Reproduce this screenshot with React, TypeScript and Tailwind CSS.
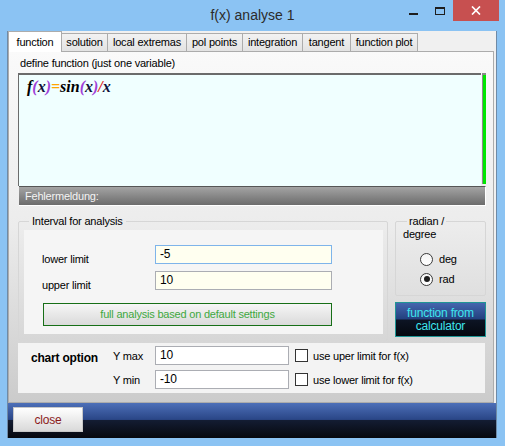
import React from "react";

const tabs = [
  { label: "function", cls: "w-[54px]", active: true },
  { label: "solution", cls: "w-[47px]", active: false },
  { label: "local extremas", cls: "w-[80px]", active: false },
  { label: "pol points", cls: "w-[57px]", active: false },
  { label: "integration", cls: "w-[61px]", active: false },
  { label: "tangent", cls: "w-[49px]", active: false },
  { label: "function plot", cls: "w-[68px]", active: false },
];

function Radio({ checked }: { checked?: boolean }) {
  return (
    <div className="w-[13px] h-[13px] rounded-full border border-[#3a3a3a] bg-linear-to-b from-[#f4f4f4] to-white flex items-center justify-center">
      {checked && <div className="w-[6px] h-[6px] rounded-full bg-[#1c1c1c]" />}
    </div>
  );
}

function Check() {
  return <div className="w-[13px] h-[13px] border border-[#333] bg-white" />;
}

export default function App() {
  return (
    <div className="w-[505px] h-[446px] bg-[#8bc3f3] flex flex-col pb-[8px] font-['Liberation_Sans',Arial,sans-serif] text-[11px] tracking-[-0.2px] text-black overflow-hidden">
      {/* title bar */}
      <div className="h-[31px] shrink-0 relative flex justify-center pt-[6px]">
        <span className="text-[14px] leading-[18px] tracking-normal text-[#2b2b2b]">f(x) analyse 1</span>
        <div className="absolute right-[6px] top-0 flex">
          <div className="w-[27px] h-[21px] flex justify-center pt-[13px]">
            <div className="w-[9px] h-[2px] bg-[#1e1e1e]" />
          </div>
          <div className="w-[26px] h-[21px] flex justify-center pt-[7px]">
            <div className="w-[10px] h-[8px] border border-t-2 border-[#1e1e1e]" />
          </div>
          <div className="w-[46px] h-[21px] bg-[#c75050] flex items-center justify-center">
            <svg width="10" height="9" viewBox="0 0 10 9">
              <path d="M1 0.5 L9 8.5 M9 0.5 L1 8.5" stroke="white" strokeWidth="1.7" />
            </svg>
          </div>
        </div>
      </div>

      {/* client */}
      <div className="ml-[7px] w-[490px] flex-1 flex flex-col border-x border-[#6f8aa6] bg-[#f0f0f0]">
        {/* tab strip */}
        <div className="h-[20px] shrink-0 flex items-end">
          {tabs.map((t) =>
            t.active ? (
              <div
                key={t.label}
                className={`${t.cls} h-[21px] -mb-px relative z-10 bg-white border border-b-0 border-[#acacac] flex items-center justify-center`}
              >
                {t.label}
              </div>
            ) : (
              <div
                key={t.label}
                className={`${t.cls} h-[18px] -ml-px border border-b-0 border-[#acacac] bg-linear-to-b from-[#f2f2f2] to-[#e3e3e3] flex items-center justify-center`}
              >
                {t.label}
              </div>
            )
          )}
        </div>

        {/* tab page */}
        <div className="mr-[2px] h-[352px] shrink-0 border border-[#acacac] bg-linear-to-b from-[#fafafa] via-[#ececec] to-[#cbcbcb] flex flex-col pl-[9px] pt-[5px]">
          <div className="pl-[2px] leading-[12px] h-[12px]">define function (just one variable)</div>

          {/* text area + green bar */}
          <div className="mt-[4px] flex h-[113px]">
            <div className="w-[463px] h-[113px] bg-[#f0ffff] border-t-2 border-l border-[#6b6b6b] pl-[8px] pt-[2px]">
              <span className="font-['Liberation_Serif',serif] italic font-bold text-[16px] leading-[19px] tracking-normal">
                <span className="text-black">f</span>
                <span className="text-[#a040d8]">(</span>
                <span className="text-[#10103a]">x</span>
                <span className="text-[#a040d8]">)</span>
                <span className="text-[#ffa500]">=</span>
                <span className="text-black">sin</span>
                <span className="text-[#a040d8]">(</span>
                <span className="text-[#10103a]">x</span>
                <span className="text-[#a040d8]">)</span>
                <span className="text-[#e02020]">/</span>
                <span className="text-[#10103a]">x</span>
              </span>
            </div>
            <div className="ml-[1px] w-[4px] h-[111px] border-t-2 border-l border-[#8a8a8a] bg-[#00e600]" />
          </div>

          {/* Fehlermeldung */}
          <div className="ml-[1px] w-[467px] h-[20px] border-t border-[#565656] border-r border-b border-r-white border-b-white bg-linear-to-b from-[#a4a4a4] to-[#6c6c6c] text-[#f4f4f4] pl-[6px] flex items-center">
            Fehlermeldung:
          </div>

          {/* groups */}
          <div className="mt-[9px] flex">
            <fieldset className="w-[370px] h-[126px] border border-[#d6d6d6] rounded-[2px] pl-[5px] pr-[4px] pb-[6px]">
              <legend className="ml-[5px] px-[3px] leading-[13px]">Interval for analysis</legend>
              <div className="mt-[2px] h-[104px] bg-[#f5f5f5] pl-[18px] pt-[15px] flex flex-col">
                <div className="flex h-[19px]">
                  <div className="w-[113px] pt-[8px] leading-[13px]">lower limit</div>
                  <div className="w-[177px] h-[19px] bg-[#fffff0] border border-[#7eb4ea] pl-[4px] text-[12px] leading-[17px]">-5</div>
                </div>
                <div className="mt-[7px] flex h-[19px]">
                  <div className="w-[113px] pt-[8px] leading-[13px]">upper limit</div>
                  <div className="w-[177px] h-[19px] bg-[#fffff0] border border-[#abadb3] pl-[4px] text-[12px] leading-[17px]">10</div>
                </div>
                <div className="mt-[13px] ml-[1px] w-[289px] h-[23px] border border-[#176f17] bg-linear-to-b from-[#f6f6f6] to-[#dadada] text-[#3ea83e] flex items-center justify-center">
                  full analysis based on default settings
                </div>
              </div>
            </fieldset>

            <div className="ml-[7px] flex flex-col">
              <fieldset className="w-[91px] h-[81px] border border-[#d6d6d6] rounded-[2px] pl-[6px]">
                <legend className="ml-[5px] px-[2px] leading-[13px]">radian /</legend>
                <div className="leading-[13px] pl-[1px]">degree</div>
                <div className="mt-[11px] pl-[18px] flex items-center gap-[6px] h-[14px]">
                  <Radio />
                  <span>deg</span>
                </div>
                <div className="mt-[6px] pl-[18px] flex items-center gap-[6px] h-[14px]">
                  <Radio checked />
                  <span>rad</span>
                </div>
              </fieldset>
              <div className="mt-[6px] w-[91px] h-[35px] border border-[#1f9595] bg-[linear-gradient(to_bottom,#4466ae_0%,#22407e_49%,#0d1424_51%,#05080f_100%)] text-[#3fe6ee] flex flex-col items-center justify-center leading-[13px] text-[12px]">
                <span>function from</span>
                <span>calculator</span>
              </div>
            </div>
          </div>

          {/* chart option */}
          <div className="mt-[2px] w-[467px] h-[50px] bg-[#f3f3f3] pt-[3px] flex">
            <div className="w-[95px] pl-[13px] pt-[5px] font-bold text-[12px] leading-[14px]">chart option</div>
            <div className="flex flex-col gap-[5px]">
              <div className="flex items-center h-[19px]">
                <div className="w-[42px] pt-[2px]">Y max</div>
                <div className="w-[134px] h-[19px] bg-white border border-[#abadb3] pl-[4px] text-[12px] leading-[17px]">10</div>
                <div className="ml-[6px]"><Check /></div>
                <div className="ml-[5px] pt-[2px]">use uper limit for f(x)</div>
              </div>
              <div className="flex items-center h-[19px]">
                <div className="w-[42px] pt-[2px]">Y min</div>
                <div className="w-[134px] h-[19px] bg-white border border-[#abadb3] pl-[4px] text-[12px] leading-[17px]">-10</div>
                <div className="ml-[6px]"><Check /></div>
                <div className="ml-[5px] pt-[2px]">use lower limit for f(x)</div>
              </div>
            </div>
          </div>
        </div>

        {/* bottom bar */}
        <div className="flex-1 bg-[linear-gradient(to_bottom,#4d6fb8_0%,#2a4687_47%,#131c32_50%,#06080e_100%)] pl-[5px] pt-[4px]">
          <div className="w-[70px] h-[25px] border border-[#c8c8c8] bg-linear-to-b from-white to-[#d9d9d9] text-[#8b1a1a] text-[12px] flex items-center justify-center">
            close
          </div>
        </div>
      </div>
    </div>
  );
}
